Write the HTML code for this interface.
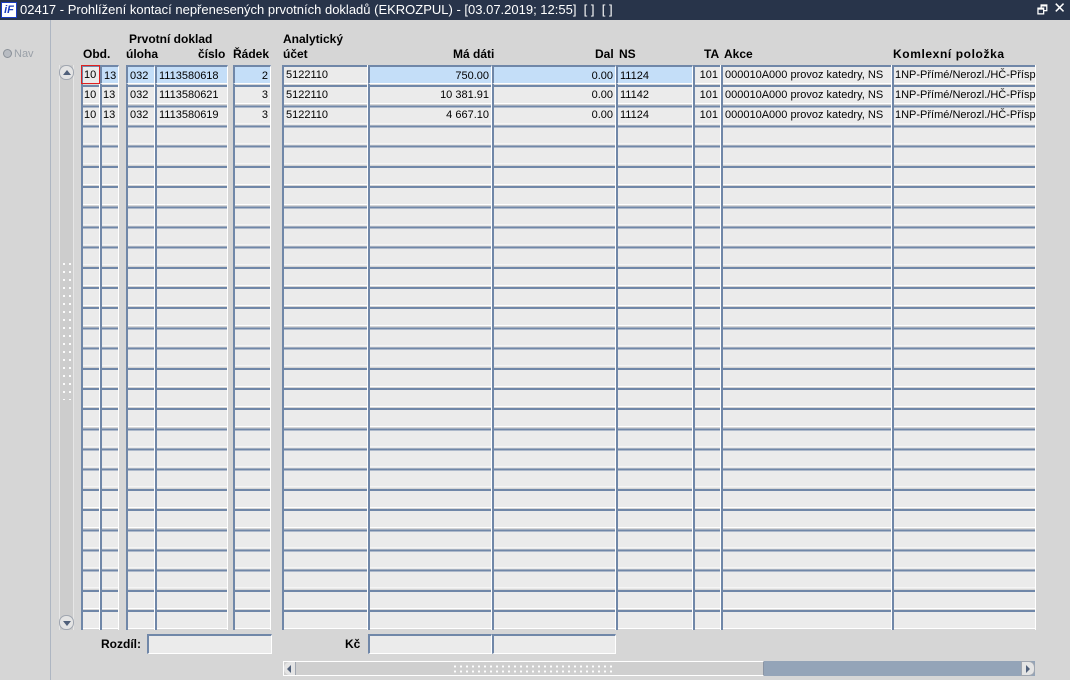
<!DOCTYPE html>
<html><head><meta charset="utf-8">
<style>
*{margin:0;padding:0;box-sizing:border-box}
body{width:1070px;height:680px;overflow:hidden;background:#d6d6d6;font-family:"Liberation Sans",Arial,sans-serif;font-size:11px;color:#000;position:relative}
#title{position:absolute;left:0;top:0;width:1070px;height:20px;background:#28344a;color:#fff;font-size:13px;line-height:20px}
#title .logo{position:absolute;left:1px;top:2px;width:16px;height:16px;background:#fff;border:1px solid #1a3cc0;color:#1a3cc0;font-weight:bold;font-style:italic;font-size:11px;line-height:14px;text-align:center}
#title .t{position:absolute;left:20px;top:0}
#left{position:absolute;left:0;top:20px;width:51px;height:660px;border-right:1px solid #aeb6c2}
.nav{position:absolute;left:3px;top:28px;color:#9aa0a8;font-size:11px}
.nav i{display:inline-block;width:9px;height:9px;border-radius:50%;background:#b8bcc2;border:1px solid #8a9098;vertical-align:-1px;margin-right:2px}
.hd{position:absolute;font-weight:bold;font-size:12px}
.col{position:absolute;top:65px;height:565px;
background:
linear-gradient(to left,#fff 0 1px,transparent 1px),
linear-gradient(to right,#7087a8 0 2px,transparent 2px),
repeating-linear-gradient(to bottom,#7087a8 0 2px,#ebebeb 2px 18px,#fff 18px 19px,#d6d6d6 19px 20.185px);}
.c{position:absolute;height:19px;line-height:19px;padding:1px 3px 0 4px;white-space:nowrap;overflow:hidden}
.r{text-align:right}
.blue{background:#c4def8;border-top:2px solid #7087a8;border-left:2px solid #7087a8;border-right:1px solid #fff;border-bottom:1px solid #fff;padding:0 3px 0 2px}
.blue.r{padding-right:2px}
#vs{position:absolute;left:59px;top:65px;width:15px;height:565px;background:#cdcdcd;border-left:1px solid #e6e6e6;border-right:1px solid #e6e6e6}
.btn{position:absolute;left:-1px;width:15px;height:15px;background:#e4e4e4;border:1px solid #a0a6b0;border-radius:7px}
#hs{position:absolute;left:283px;top:661px;width:752px;height:15px;background:#94a4b8}
#hs .th{position:absolute;left:0;top:0;width:481px;height:15px;background:#cfcfcf;border:1px solid #fff;border-right:1px solid #8a94a4}
.box{position:absolute;height:20px;background:#ebebeb;border-top:2px solid #7087a8;border-left:2px solid #7087a8;border-right:1px solid #fff;border-bottom:1px solid #fff}
.dots{position:absolute;background:radial-gradient(circle,#fff 0 1px,transparent 1.2px);}
</style></head><body>
<div id="title"><div class="logo">iF</div><div class="t">02417 - Prohlížení kontací nepřenesených prvotních dokladů (EKROZPUL) - [03.07.2019; 12:55]&nbsp; [ ]&nbsp; [ ]</div>
<div style="position:absolute;right:22px;top:0;font-size:12px">🗗</div><div style="position:absolute;right:4px;top:-1px;font-size:15px">✕</div></div>
<div id="left"><div class="nav"><i></i>Nav</div></div>

<div class="hd" style="left:129px;top:32px">Prvotní doklad</div>
<div class="hd" style="left:283px;top:32px">Analytický</div>
<div class="hd" style="left:83px;top:47px">Obd.</div>
<div class="hd" style="left:126px;top:47px">úloha</div>
<div class="hd" style="left:198px;top:47px">číslo</div>
<div class="hd" style="left:233px;top:47px">Řádek</div>
<div class="hd" style="left:283px;top:47px">účet</div>
<div class="hd" style="left:453px;top:47px">Má dáti</div>
<div class="hd" style="left:595px;top:47px">Dal</div>
<div class="hd" style="left:619px;top:47px">NS</div>
<div class="hd" style="left:704px;top:47px">TA</div>
<div class="hd" style="left:724px;top:47px">Akce</div>
<div class="hd" style="left:893px;top:47px;letter-spacing:0.6px">Komlexní položka</div>

<div id="vs"><div class="btn" style="top:0"><div style="margin:4px auto 0;width:0;height:0;border-left:4px solid transparent;border-right:4px solid transparent;border-bottom:5px solid #50607a"></div></div>
<div class="dots" style="left:1px;top:195px;width:12px;height:140px;background-size:6px 8px"></div>
<div class="btn" style="bottom:0"><div style="margin:5px auto 0;width:0;height:0;border-left:4px solid transparent;border-right:4px solid transparent;border-top:5px solid #50607a"></div></div></div>

<div class="col" style="left:81px;width:19px"></div>
<div class="col" style="left:100px;width:19px"></div>
<div class="col" style="left:126px;width:29px"></div>
<div class="col" style="left:155px;width:73px"></div>
<div class="col" style="left:233px;width:38px"></div>
<div class="col" style="left:282px;width:86px"></div>
<div class="col" style="left:368px;width:124px"></div>
<div class="col" style="left:492px;width:124px"></div>
<div class="col" style="left:616px;width:77px"></div>
<div class="col" style="left:693px;width:28px"></div>
<div class="col" style="left:721px;width:171px"></div>
<div class="col" style="left:892px;width:144px"></div>

<!-- row 1 -->
<div class="c" style="left:81px;top:65px;width:19px;border:1px solid #e02020;padding-left:2px;padding-top:0">10</div>
<div class="c blue" style="left:100px;top:65px;width:19px">13</div>
<div class="c blue" style="left:126px;top:65px;width:29px">032</div>
<div class="c blue" style="left:155px;top:65px;width:73px">1113580618</div>
<div class="c blue r" style="left:233px;top:65px;width:38px">2</div>
<div class="c" style="left:282px;top:65px;width:86px">5122110</div>
<div class="c blue r" style="left:368px;top:65px;width:124px">750.00</div>
<div class="c blue r" style="left:492px;top:65px;width:124px">0.00</div>
<div class="c blue" style="left:616px;top:65px;width:77px">11124</div>
<div class="c r" style="left:693px;top:65px;width:28px">101</div>
<div class="c" style="left:721px;top:65px;width:171px">000010A000 provoz katedry, NS</div>
<div class="c" style="left:892px;top:65px;width:144px;padding-left:3px">1NP-Přímé/Nerozl./HČ-Přísp.</div>
<!-- row 2 -->
<div class="c" style="left:81px;top:85px;width:19px;padding-left:3px">10</div>
<div class="c" style="left:100px;top:85px;width:19px;padding-left:3px">13</div>
<div class="c" style="left:126px;top:85px;width:29px">032</div>
<div class="c" style="left:155px;top:85px;width:73px">1113580621</div>
<div class="c r" style="left:233px;top:85px;width:38px">3</div>
<div class="c" style="left:282px;top:85px;width:86px">5122110</div>
<div class="c r" style="left:368px;top:85px;width:124px">10 381.91</div>
<div class="c r" style="left:492px;top:85px;width:124px">0.00</div>
<div class="c" style="left:616px;top:85px;width:77px">11142</div>
<div class="c r" style="left:693px;top:85px;width:28px">101</div>
<div class="c" style="left:721px;top:85px;width:171px">000010A000 provoz katedry, NS</div>
<div class="c" style="left:892px;top:85px;width:144px;padding-left:3px">1NP-Přímé/Nerozl./HČ-Přísp.</div>
<!-- row 3 -->
<div class="c" style="left:81px;top:105px;width:19px;padding-left:3px">10</div>
<div class="c" style="left:100px;top:105px;width:19px;padding-left:3px">13</div>
<div class="c" style="left:126px;top:105px;width:29px">032</div>
<div class="c" style="left:155px;top:105px;width:73px">1113580619</div>
<div class="c r" style="left:233px;top:105px;width:38px">3</div>
<div class="c" style="left:282px;top:105px;width:86px">5122110</div>
<div class="c r" style="left:368px;top:105px;width:124px">4 667.10</div>
<div class="c r" style="left:492px;top:105px;width:124px">0.00</div>
<div class="c" style="left:616px;top:105px;width:77px">11124</div>
<div class="c r" style="left:693px;top:105px;width:28px">101</div>
<div class="c" style="left:721px;top:105px;width:171px">000010A000 provoz katedry, NS</div>
<div class="c" style="left:892px;top:105px;width:144px;padding-left:3px">1NP-Přímé/Nerozl./HČ-Přísp.</div>

<div class="hd" style="left:101px;top:637px">Rozdíl:</div>
<div class="box" style="left:147px;top:634px;width:125px"></div>
<div class="hd" style="left:345px;top:637px">Kč</div>
<div class="box" style="left:368px;top:634px;width:124px"></div>
<div class="box" style="left:492px;top:634px;width:124px"></div>

<div id="hs"><div class="th">
<div style="position:absolute;left:0;top:0;width:12px;height:13px;background:#e4e4e4;border-right:1px solid #a0a6b0;border-radius:6px 0 0 6px"><div style="margin:3px 0 0 3px;width:0;height:0;border-top:4px solid transparent;border-bottom:4px solid transparent;border-right:4px solid #50607a"></div></div>
<div class="dots" style="left:168px;top:2px;width:160px;height:10px;background-size:6px 5px"></div></div>
<div style="position:absolute;right:0;top:0;width:14px;height:15px;background:#e4e4e4;border:1px solid #a0a6b0;border-radius:0 6px 6px 0"><div style="margin:3px 0 0 4px;width:0;height:0;border-top:4px solid transparent;border-bottom:4px solid transparent;border-left:4px solid #50607a"></div></div>
</div>
</body></html>
